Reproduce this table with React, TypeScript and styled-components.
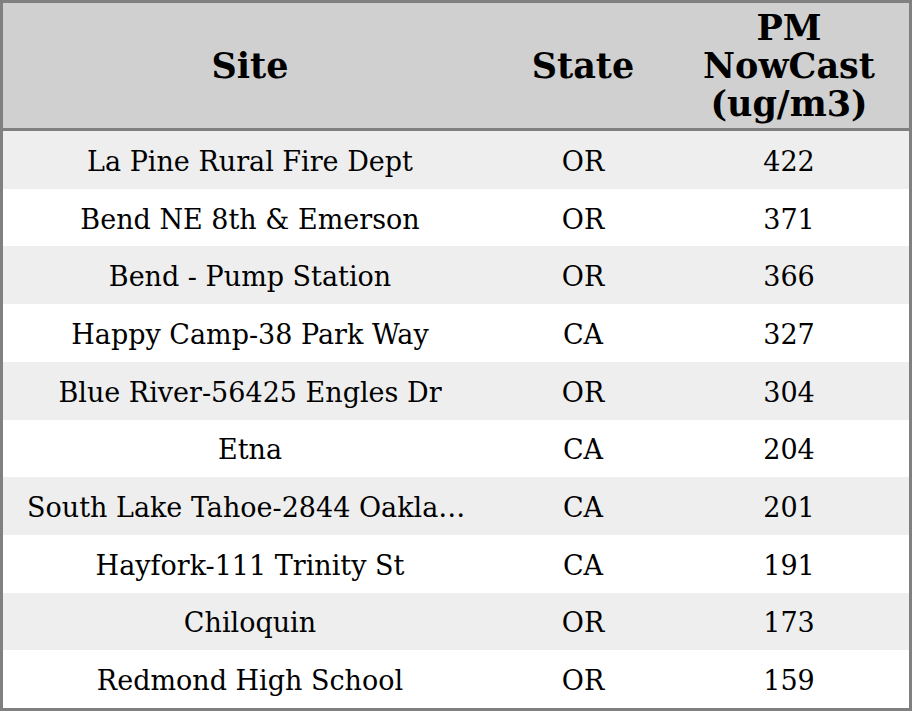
import React from "react";
import styled, { createGlobalStyle } from "styled-components";

const GlobalStyle = createGlobalStyle`
  html, body {
    margin: 0;
    padding: 0;
    background: #ffffff;
  }
  * {
    box-sizing: border-box;
  }
`;

interface SiteRow {
  site: string;
  state: string;
  pm: number;
}

const rows: SiteRow[] = [
  { site: "La Pine Rural Fire Dept", state: "OR", pm: 422 },
  { site: "Bend NE 8th & Emerson", state: "OR", pm: 371 },
  { site: "Bend - Pump Station", state: "OR", pm: 366 },
  { site: "Happy Camp-38 Park Way", state: "CA", pm: 327 },
  { site: "Blue River-56425 Engles Dr", state: "OR", pm: 304 },
  { site: "Etna", state: "CA", pm: 204 },
  { site: "South Lake Tahoe-2844 Oakland Ave", state: "CA", pm: 201 },
  { site: "Hayfork-111 Trinity St", state: "CA", pm: 191 },
  { site: "Chiloquin", state: "OR", pm: 173 },
  { site: "Redmond High School", state: "OR", pm: 159 },
];

export default function App() {
  return (
    <>
      <GlobalStyle />
      <Table>
        <HeaderRow>
          <HeadCell>Site</HeadCell>
          <HeadCell>State</HeadCell>
          <HeadCell>
            PM
            <br />
            NowCast
            <br />
            (ug/m3)
          </HeadCell>
        </HeaderRow>
        {rows.map((r, i) => (
          <BodyRow key={r.site} $striped={i % 2 === 0}>
            <SiteCell>{r.site}</SiteCell>
            <Cell>{r.state}</Cell>
            <Cell>{r.pm}</Cell>
          </BodyRow>
        ))}
      </Table>
    </>
  );
}

const Table = styled.div`
  width: 912px;
  height: 711px;
  border: 3px solid #808080;
  display: grid;
  grid-template-rows: 128px repeat(10, 1fr);
  font-family: "DejaVu Serif", serif;
  color: #000000;
`;

const HeaderRow = styled.div`
  display: grid;
  grid-template-columns: 494px 172px 1fr;
  background: #d0d0d0;
  border-bottom: 3px solid #808080;
`;

const HeadCell = styled.div`
  display: flex;
  align-items: center;
  justify-content: center;
  text-align: center;
  font-size: 35px;
  font-weight: bold;
  line-height: 38px;
`;

const BodyRow = styled.div<{ $striped: boolean }>`
  display: grid;
  grid-template-columns: 494px 172px 1fr;
  background: ${(p) => (p.$striped ? "#eeeeee" : "#ffffff")};
`;

const Cell = styled.div`
  display: flex;
  align-items: center;
  justify-content: center;
  padding-top: 3px;
  font-size: 27px;
  white-space: nowrap;
`;

const SiteCell = styled(Cell)`
  display: block;
  align-self: center;
  text-align: center;
  overflow: hidden;
  text-overflow: ellipsis;
  padding: 3px 24px 0;
`;
